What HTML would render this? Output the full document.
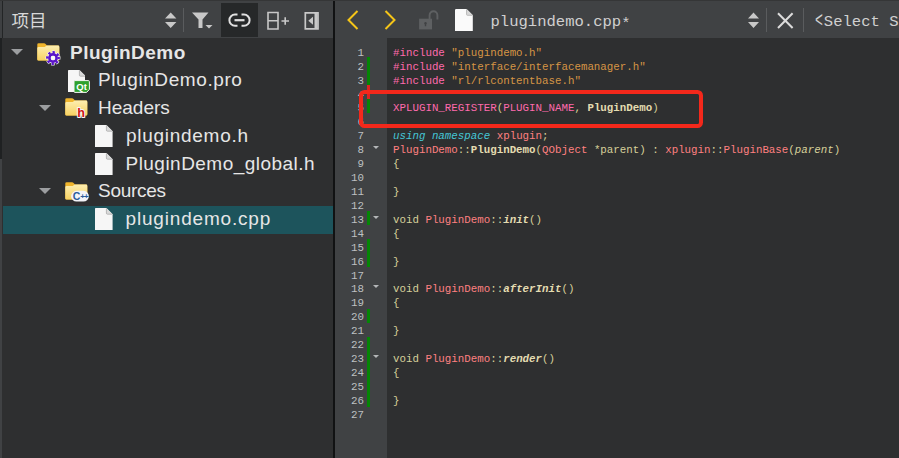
<!DOCTYPE html><html><head><meta charset="utf-8"><title>Qt Creator</title><style>
html,body{margin:0;padding:0;}
body{width:899px;height:458px;overflow:hidden;background:#2e2f30;position:relative;font-family:"Liberation Sans","Noto Sans CJK SC",sans-serif;}
.abs{position:absolute;}
#leftstrip{left:0;top:0;width:2px;height:458px;background:linear-gradient(to bottom,#3e4042 0,#3e4042 38px,#1f2122 38px,#1f2122 159px,#404244 159px,#404244 100%);}
#leftline{left:2px;top:0;width:1px;height:38px;background:#232526;}
#ltool{left:3px;top:0;width:330px;height:38px;background:#404244;}
#tree{left:2px;top:38px;width:331px;height:420px;background:#2e2f30;}
#divider{left:333px;top:0;width:2px;height:458px;background:#111213;}
#rtool{left:335px;top:0;width:564px;height:38px;background:#404244;}
#gutter{left:335px;top:38px;width:52px;height:420px;background:#404244;}
#editor{left:387px;top:38px;width:512px;height:420px;background:#2e2f30;}
#topline{left:0;top:0;width:899px;height:1px;background:#353637;}
.row{position:absolute;left:0;height:27.8px;line-height:27.8px;font-size:19px;color:#e6e6e6;white-space:nowrap;}
.sel{position:absolute;left:3px;width:330px;height:27.8px;background:#1d545c;}
.ln{position:absolute;left:335px;width:29px;text-align:right;font-family:"Liberation Mono",monospace;font-size:10.8px;color:#bec0c2;height:13.9px;line-height:13.9px;}
.cl{position:absolute;left:393px;font-family:"Liberation Mono",monospace;font-size:10.8px;color:#d6cf9a;height:13.9px;line-height:13.9px;white-space:pre;}
.pp{color:#ff6aad;} .st{color:#d69545;} .kw{color:#45c6d6;font-style:italic;} .ty{color:#ff8080;}
.fn{font-weight:bold;color:#e4dcb0;} .fi{font-weight:bold;font-style:italic;color:#e4dcb0;} .pa{font-style:italic;color:#d6cf9a;} .pl{color:#d6cf9a;}
.gm{position:absolute;left:366.7px;width:3.2px;background:#058505;}
.fold{position:absolute;left:373px;width:0;height:0;border-left:3.8px solid transparent;border-right:3.8px solid transparent;border-top:3.7px solid #b4b6b8;}
.tri{position:absolute;width:0;height:0;border-left:6.2px solid transparent;border-right:6.2px solid transparent;border-top:6.4px solid #9c9ea0;}
</style></head><body>
<div class="abs" id="topline" style="z-index:5"></div><div class="abs" id="ltool"></div><div class="abs" id="tree"></div><div class="abs" id="rtool"></div><div class="abs" id="gutter"></div><div class="abs" id="editor"></div><div class="abs" id="leftstrip"></div><div class="abs" id="leftline"></div><div class="abs" id="divider"></div>
<div class="abs" style="left:11.4px;top:9.8px;font-size:17.5px;line-height:22px;color:#d8d8d8;">项目</div>
<svg class="abs" style="left:160px;top:8px" width="22" height="24" viewBox="0 0 22 24"><path d="M5 10.5 L10.7 4.5 L16.4 10.5 Z M5 14 L10.7 20 L16.4 14 Z" fill="#c8c8c8"/></svg>
<div class="abs" style="left:183px;top:8px;width:1px;height:24px;background:#5a5c5e;"></div>
<svg class="abs" style="left:190px;top:8px" width="26" height="24" viewBox="0 0 26 24"><path d="M2 4.5 H18.5 L12.5 11.5 V20 H8.5 V11.5 Z" fill="#c8c8c8"/><path d="M15.5 17 H22.5 L19 20.5 Z" fill="#c8c8c8"/></svg>
<div class="abs" style="left:221px;top:3px;width:37px;height:34px;background:#262829;"></div>
<svg class="abs" style="left:227px;top:10px" width="26" height="20" viewBox="0 0 26 20"><path d="M10.5 4.6 H8 a5.6 5.6 0 0 0 0 11.2 H10.5 M14.5 4.6 H17 a5.6 5.6 0 0 1 0 11.2 H14.5" fill="none" stroke="#e0e0e0" stroke-width="2"/><path d="M7.5 10.2 H17.5" stroke="#e0e0e0" stroke-width="2.2"/></svg>
<svg class="abs" style="left:265px;top:10px" width="28" height="22" viewBox="0 0 28 22"><path d="M3 2.5 H13 V19 H3 Z M3 10.7 H13" fill="none" stroke="#c8c8c8" stroke-width="1.6"/><path d="M16.5 11 H24 M20.2 7.2 V14.8" stroke="#c8c8c8" stroke-width="1.6"/></svg>
<svg class="abs" style="left:302px;top:10px" width="20" height="22" viewBox="0 0 20 22"><path d="M3.3 2.8 H16 V18.8 H3.3 Z" fill="none" stroke="#c8c8c8" stroke-width="1.7"/><path d="M14 3 V18.5" stroke="#c8c8c8" stroke-width="3"/><path d="M11 6.8 V14.8 L6.3 10.8 Z" fill="#c8c8c8"/></svg>
<div class="sel" style="top:205.8px"></div>
<div class="row" id="r0" style="top:38.50px;left:70px;font-size:19px;letter-spacing:0.5px;font-weight:bold;">PluginDemo</div>
<div class="row" id="r1" style="top:66.25px;left:98px;font-size:19px;letter-spacing:0.59px;">PluginDemo.pro</div>
<div class="row" id="r2" style="top:94.00px;left:98px;font-size:19px;letter-spacing:0px;">Headers</div>
<div class="row" id="r3" style="top:121.75px;left:126px;font-size:19px;letter-spacing:0.72px;">plugindemo.h</div>
<div class="row" id="r4" style="top:149.50px;left:125.5px;font-size:19px;letter-spacing:0.47px;">PluginDemo_global.h</div>
<div class="row" id="r5" style="top:177.25px;left:98px;font-size:19px;letter-spacing:-0.28px;">Sources</div>
<div class="row" id="r6" style="top:205.00px;left:125.5px;font-size:19px;letter-spacing:0.82px;">plugindemo.cpp</div>
<div class="tri" style="left:11.0px;top:49.3px"></div>
<div class="tri" style="left:38.8px;top:104.8px"></div>
<div class="tri" style="left:38.8px;top:188.1px"></div>
<svg class="abs" style="left:67.5px;top:69.5px" width="17.6" height="22.2" viewBox="0 0 17.6 22.2"><path d="M0.6 0 H11.4 L17.6 6.2 V22.2 H0 V0.6 Z" fill="#f6f6f6"/><path d="M11.4 0 L17.6 6.2 H12.4 a1 1 0 0 1 -1 -1 Z" fill="#dadada"/><path d="M11.4 0.4 V5.2 a1 1 0 0 0 1 1 H17.2" fill="none" stroke="#a4a4a4" stroke-width="0.7"/></svg>
<svg class="abs" style="left:95.1px;top:125.0px" width="17.6" height="22.2" viewBox="0 0 17.6 22.2"><path d="M0.6 0 H11.4 L17.6 6.2 V22.2 H0 V0.6 Z" fill="#f6f6f6"/><path d="M11.4 0 L17.6 6.2 H12.4 a1 1 0 0 1 -1 -1 Z" fill="#dadada"/><path d="M11.4 0.4 V5.2 a1 1 0 0 0 1 1 H17.2" fill="none" stroke="#a4a4a4" stroke-width="0.7"/></svg>
<svg class="abs" style="left:95.1px;top:152.7px" width="17.6" height="22.2" viewBox="0 0 17.6 22.2"><path d="M0.6 0 H11.4 L17.6 6.2 V22.2 H0 V0.6 Z" fill="#f6f6f6"/><path d="M11.4 0 L17.6 6.2 H12.4 a1 1 0 0 1 -1 -1 Z" fill="#dadada"/><path d="M11.4 0.4 V5.2 a1 1 0 0 0 1 1 H17.2" fill="none" stroke="#a4a4a4" stroke-width="0.7"/></svg>
<svg class="abs" style="left:95.1px;top:208.2px" width="17.6" height="22.2" viewBox="0 0 17.6 22.2"><path d="M0.6 0 H11.4 L17.6 6.2 V22.2 H0 V0.6 Z" fill="#f6f6f6"/><path d="M11.4 0 L17.6 6.2 H12.4 a1 1 0 0 1 -1 -1 Z" fill="#dadada"/><path d="M11.4 0.4 V5.2 a1 1 0 0 0 1 1 H17.2" fill="none" stroke="#a4a4a4" stroke-width="0.7"/></svg>
<svg class="abs" style="left:72.6px;top:80.3px" width="17" height="13" viewBox="0 0 17 13"><path d="M1 1.6 a1 1 0 0 1 1 -1 H15.4 a1 1 0 0 1 1 1 V9.4 L13.6 12.4 H2 a1 1 0 0 1 -1 -1 Z" fill="#2ea12e" stroke="#f4f4f4" stroke-width="1"/><text x="8.6" y="10" font-family="Liberation Sans, sans-serif" font-size="9.5" font-weight="bold" fill="#ffffff" text-anchor="middle">Qt</text></svg>
<svg class="abs" style="left:36.8px;top:42.9px" width="23" height="18" viewBox="0 0 23 18"><defs><linearGradient id="fg" x1="0" y1="0" x2="0" y2="1"><stop offset="0" stop-color="#fdeeb0"/><stop offset="1" stop-color="#f7d262"/></linearGradient></defs><path d="M0.3 1.6 a1.3 1.3 0 0 1 1.3 -1.3 H7.2 a1.5 1.5 0 0 1 1.1 0.5 L10 2.6 H21 a1.3 1.3 0 0 1 1.3 1.3 V16.2 a1.3 1.3 0 0 1 -1.3 1.3 H1.6 a1.3 1.3 0 0 1 -1.3 -1.3 Z" fill="#f0b52c"/><path d="M0.3 5.2 a1.3 1.3 0 0 1 1.3 -1.3 H7.6 L9.8 2.6 H21 a1.3 1.3 0 0 1 1.3 1.3 V16.2 a1.3 1.3 0 0 1 -1.3 1.3 H1.6 a1.3 1.3 0 0 1 -1.3 -1.3 Z" fill="url(#fg)"/></svg>
<svg class="abs" style="left:64.6px;top:98.4px" width="23" height="18" viewBox="0 0 23 18"><defs><linearGradient id="fg" x1="0" y1="0" x2="0" y2="1"><stop offset="0" stop-color="#fdeeb0"/><stop offset="1" stop-color="#f7d262"/></linearGradient></defs><path d="M0.3 1.6 a1.3 1.3 0 0 1 1.3 -1.3 H7.2 a1.5 1.5 0 0 1 1.1 0.5 L10 2.6 H21 a1.3 1.3 0 0 1 1.3 1.3 V16.2 a1.3 1.3 0 0 1 -1.3 1.3 H1.6 a1.3 1.3 0 0 1 -1.3 -1.3 Z" fill="#f0b52c"/><path d="M0.3 5.2 a1.3 1.3 0 0 1 1.3 -1.3 H7.6 L9.8 2.6 H21 a1.3 1.3 0 0 1 1.3 1.3 V16.2 a1.3 1.3 0 0 1 -1.3 1.3 H1.6 a1.3 1.3 0 0 1 -1.3 -1.3 Z" fill="url(#fg)"/></svg>
<svg class="abs" style="left:64.6px;top:181.7px" width="23" height="18" viewBox="0 0 23 18"><defs><linearGradient id="fg" x1="0" y1="0" x2="0" y2="1"><stop offset="0" stop-color="#fdeeb0"/><stop offset="1" stop-color="#f7d262"/></linearGradient></defs><path d="M0.3 1.6 a1.3 1.3 0 0 1 1.3 -1.3 H7.2 a1.5 1.5 0 0 1 1.1 0.5 L10 2.6 H21 a1.3 1.3 0 0 1 1.3 1.3 V16.2 a1.3 1.3 0 0 1 -1.3 1.3 H1.6 a1.3 1.3 0 0 1 -1.3 -1.3 Z" fill="#f0b52c"/><path d="M0.3 5.2 a1.3 1.3 0 0 1 1.3 -1.3 H7.6 L9.8 2.6 H21 a1.3 1.3 0 0 1 1.3 1.3 V16.2 a1.3 1.3 0 0 1 -1.3 1.3 H1.6 a1.3 1.3 0 0 1 -1.3 -1.3 Z" fill="url(#fg)"/></svg>
<svg class="abs" style="left:45px;top:50.0px" width="16" height="16" viewBox="-8 -8 16 16"><g fill="none"><circle r="5.7" stroke="#f4f4f4" stroke-width="3.6" stroke-dasharray="3.04 1.437" transform="rotate(-16.5)"/><circle r="3.6" stroke="#f4f4f4" stroke-width="4.2"/><circle r="5.7" stroke="#5a14c8" stroke-width="2.4" stroke-dasharray="2.24 2.237" transform="rotate(-11)"/><circle r="3.6" stroke="#5a14c8" stroke-width="2.6"/></g><circle r="2.2" fill="#f8f8f8"/></svg>
<svg class="abs" style="left:73px;top:105.2px" width="16" height="16" viewBox="0 0 16 16"><text x="8.2" y="12" font-family="Liberation Sans, sans-serif" font-size="12.6" font-weight="bold" fill="#d01414" stroke="#f6f6f6" stroke-width="2" paint-order="stroke" stroke-linejoin="round" text-anchor="middle">h</text></svg>
<svg class="abs" style="left:70px;top:190.4px" width="20" height="13" viewBox="0 0 20 13"><path d="M6.5 0.8 H13.5 a5.4 5.4 0 0 1 0 10.8 H6.5 a5.4 5.4 0 0 1 0 -10.8 Z" fill="#f2f4f8"/><text x="6.6" y="10" font-family="Liberation Sans, sans-serif" font-size="10.5" font-weight="bold" fill="#2b5c9c" text-anchor="middle">C</text><text x="14" y="9.3" font-family="Liberation Sans, sans-serif" font-size="8" font-weight="bold" fill="#2b5c9c" text-anchor="middle" letter-spacing="-1">++</text></svg>
<svg class="abs" style="left:344px;top:8px" width="18" height="24" viewBox="0 0 18 24"><path d="M13.5 3 L4.5 12 L13.5 21" fill="none" stroke="#f5c518" stroke-width="2"/></svg>
<svg class="abs" style="left:381px;top:8px" width="18" height="24" viewBox="0 0 18 24"><path d="M4.5 3 L13.5 12 L4.5 21" fill="none" stroke="#f5c518" stroke-width="2"/></svg>
<svg class="abs" style="left:417px;top:9px" width="24" height="22" viewBox="0 0 24 22"><path d="M12.6 10 V6.2 a3.9 3.9 0 0 1 7.8 0 V10.6" fill="none" stroke="#5e6062" stroke-width="1.9"/><rect x="2.1" y="9.7" width="12.9" height="10.7" fill="#5e6062"/><path d="M8.5 13 a1.3 1.3 0 0 1 0.7 2.4 V17.3 H7.8 V15.4 a1.3 1.3 0 0 1 0.7 -2.4 Z" fill="#404244"/></svg>
<svg class="abs" style="left:455.4px;top:8.8px" width="17.8" height="22.6" viewBox="0 0 17.6 22.2"><path d="M0.6 0 H11.4 L17.6 6.2 V22.2 H0 V0.6 Z" fill="#fafafa"/><path d="M11.4 0 L17.6 6.2 H12.4 a1 1 0 0 1 -1 -1 Z" fill="#d8d8d8"/><path d="M11.4 0.4 V5.2 a1 1 0 0 0 1 1 H17.2" fill="none" stroke="#a8a8a8" stroke-width="0.7"/></svg>
<div class="abs" id="title" style="left:490.5px;top:10.85px;font-family:'Liberation Mono',monospace;font-size:15.55px;line-height:22px;color:#d0d0d0;white-space:pre;">plugindemo.cpp<span style="position:relative;top:2.6px;">*</span></div>
<svg class="abs" style="left:744px;top:8px" width="18" height="24" viewBox="0 0 18 24"><path d="M4 10.5 L9.5 4.5 L15 10.5 Z M4 14 L9.5 20 L15 14 Z" fill="#c8c8c8"/></svg>
<div class="abs" style="left:766px;top:8px;width:1px;height:24px;background:#5a5c5e;"></div>
<svg class="abs" style="left:775px;top:10px" width="20" height="20" viewBox="0 0 20 20"><path d="M3 3.3 L17.6 18 M17.6 3.3 L3 18" fill="none" stroke="#dcdcdc" stroke-width="2"/></svg>
<div class="abs" style="left:803px;top:8px;width:1px;height:24px;background:#5a5c5e;"></div>
<div class="abs" id="selsym" style="left:814.5px;top:10.85px;font-family:'Liberation Mono',monospace;font-size:15.55px;line-height:22px;color:#d0d0d0;white-space:pre;"><span style="display:inline-block;transform:scale(0.85,1.45);transform-origin:0 62%;">&lt;</span>Select Symbol&gt;</div>
<div class="ln" style="top:46.8px">1</div>
<div class="cl" id="c1" style="top:46.8px"><span class="pp">#include</span> <span class="st">"plugindemo.h"</span></div>
<div class="ln" style="top:60.7px">2</div>
<div class="cl" id="c2" style="top:60.7px"><span class="pp">#include</span> <span class="st">"interface/interfacemanager.h"</span></div>
<div class="ln" style="top:74.6px">3</div>
<div class="cl" id="c3" style="top:74.6px"><span class="pp">#include</span> <span class="st">"rl/rlcontentbase.h"</span></div>
<div class="ln" style="top:88.5px">4</div>
<div class="ln" style="top:102.4px">5</div>
<div class="cl" id="c5" style="top:102.4px"><span class="pp">XPLUGIN_REGISTER</span>(<span class="pp">PLUGIN_NAME</span>, <span class="fn">PluginDemo</span>)</div>
<div class="ln" style="top:116.4px">6</div>
<div class="ln" style="top:130.3px">7</div>
<div class="cl" id="c7" style="top:130.3px"><span class="kw">using</span> <span class="kw">namespace</span> <span class="ty">xplugin</span>;</div>
<div class="ln" style="top:144.2px">8</div>
<div class="cl" id="c8" style="top:144.2px"><span class="ty">PluginDemo</span>::<span class="fn">PluginDemo</span>(<span class="ty">QObject</span> *parent) : <span class="ty">xplugin</span>::<span class="ty">PluginBase</span>(<span class="pa">parent</span>)</div>
<div class="ln" style="top:158.1px">9</div>
<div class="cl" id="c9" style="top:158.1px">{</div>
<div class="ln" style="top:172.1px">10</div>
<div class="ln" style="top:186.0px">11</div>
<div class="cl" id="c11" style="top:186.0px">}</div>
<div class="ln" style="top:199.9px">12</div>
<div class="ln" style="top:213.8px">13</div>
<div class="cl" id="c13" style="top:213.8px">void <span class="ty">PluginDemo</span>::<span class="fi">init</span>()</div>
<div class="ln" style="top:227.7px">14</div>
<div class="cl" id="c14" style="top:227.7px">{</div>
<div class="ln" style="top:241.7px">15</div>
<div class="ln" style="top:255.6px">16</div>
<div class="cl" id="c16" style="top:255.6px">}</div>
<div class="ln" style="top:269.5px">17</div>
<div class="ln" style="top:283.4px">18</div>
<div class="cl" id="c18" style="top:283.4px">void <span class="ty">PluginDemo</span>::<span class="fi">afterInit</span>()</div>
<div class="ln" style="top:297.4px">19</div>
<div class="cl" id="c19" style="top:297.4px">{</div>
<div class="ln" style="top:311.3px">20</div>
<div class="ln" style="top:325.2px">21</div>
<div class="cl" id="c21" style="top:325.2px">}</div>
<div class="ln" style="top:339.1px">22</div>
<div class="ln" style="top:353.1px">23</div>
<div class="cl" id="c23" style="top:353.1px">void <span class="ty">PluginDemo</span>::<span class="fi">render</span>()</div>
<div class="ln" style="top:367.0px">24</div>
<div class="cl" id="c24" style="top:367.0px">{</div>
<div class="ln" style="top:380.9px">25</div>
<div class="ln" style="top:394.8px">26</div>
<div class="cl" id="c26" style="top:394.8px">}</div>
<div class="ln" style="top:408.7px">27</div>
<div class="gm" style="top:57.4px;height:28.0px;background:#058505"></div>
<div class="gm" style="top:85.4px;height:14.0px;background:#e02020"></div>
<div class="gm" style="top:99.4px;height:14.0px;background:#058505"></div>
<div class="gm" style="top:211.2px;height:14.0px;background:#058505"></div>
<div class="gm" style="top:239.2px;height:28.0px;background:#058505"></div>
<div class="gm" style="top:309.1px;height:14.0px;background:#058505"></div>
<div class="gm" style="top:337.0px;height:69.9px;background:#058505"></div>
<div class="fold" style="top:146.1px"></div>
<div class="fold" style="top:215.7px"></div>
<div class="fold" style="top:285.3px"></div>
<div class="fold" style="top:355.0px"></div>
<div class="abs" style="left:359.4px;top:90.2px;width:343.6px;height:37.6px;box-sizing:border-box;border:4px solid #f3281b;border-radius:5.5px;"></div>
</body></html>
